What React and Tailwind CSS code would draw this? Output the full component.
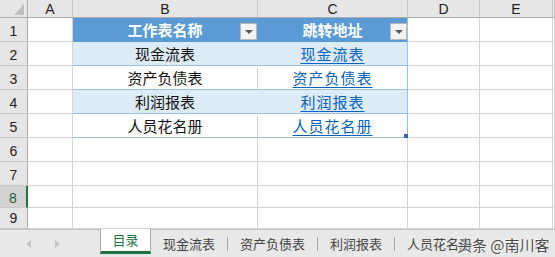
const cols = ["w-[28px]", "w-[45px]", "w-[185px]", "w-[150px]", "w-[72px]", "w-[73px]", "flex-1"];
const letters = ["A", "B", "C", "D", "E", ""];
const heights = ["h-[24px]", "h-[24px]", "h-[24px]", "h-[24px]", "h-[24px]", "h-[24px]", "h-[24px]", "h-[22px]", "h-[21px]"];

const names = ["现金流表", "资产负债表", "利润报表", "人员花名册"];

const Dropdown = () => (
  <div className="absolute right-0 bottom-[1px] w-[17px] h-[17px] bg-[#f3f3f3] border border-[#b8b8b8] flex items-center justify-center">
    <div className="w-0 h-0 border-l-[4px] border-r-[4px] border-t-[4px] border-l-transparent border-r-transparent border-t-[#555]" />
  </div>
);

const cellBase = "flex-1 flex items-center justify-center pt-[2px] border-r border-b";

const TableCell = ({ row, col }) => {
  if (row === 1) {
    return (
      <div className={`${cellBase} relative bg-[#5b9bd5] text-white font-bold border-b-[#5b9bd5] ${col === "B" ? "border-r-[#5b9bd5]" : "border-r-[#9bc2e6]"}`}>
        {col === "B" ? "工作表名称" : "跳转地址"}
        <Dropdown />
      </div>
    );
  }
  const striped = row % 2 === 0;
  const bg = striped ? "bg-[#ddebf7]" : "bg-white";
  const name = names[row - 2];
  if (col === "B") {
    return (
      <div className={`${cellBase} ${bg} border-b-[#9bc2e6] ${striped ? "border-r-[#ddebf7]" : "border-r-[#d4d4d4]"} text-[#111]`}>
        {name}
      </div>
    );
  }
  return (
    <div className={`${cellBase} relative ${bg} border-b-[#9bc2e6] border-r-[#9bc2e6]`}>
      <span className="text-[#0563c1] underline underline-offset-[3px] tracking-[1px]">{name}</span>
      {row === 5 && <div className="absolute right-[-1px] bottom-[-1px] w-[4px] h-[4px] bg-[#3a63b8]" />}
    </div>
  );
};

const GridRow = ({ n }) => {
  const selected = n === 8;
  return (
    <div className={`flex shrink-0 ${heights[n - 1]}`}>
      <div
        className={`${cols[0]} shrink-0 flex items-center justify-center border-b border-b-[#c8c8c8] text-[14px] ${
          n === 9 ? "pt-[1px]" : "pt-[3px]"
        } ${
          selected ? "bg-[#d2d2d2] text-[#1e5f3a] border-r-2 border-r-[#217346]" : "bg-[#e6e6e6] text-[#222] border-r border-r-[#ababab]"
        }`}
        style={{ fontFamily: '"Liberation Sans", Arial, sans-serif' }}
      >
        {n}
      </div>
      {cols.slice(1).map((w, i) => {
        const col = letters[i];
        const inTable = n <= 5 && (col === "B" || col === "C");
        return (
          <div key={i} className={`${w} shrink-0 flex`}>
            {inTable ? (
              <TableCell row={n} col={col} />
            ) : (
              <div className={`${cellBase} border-r-[#d4d4d4] border-b-[#d4d4d4]`} />
            )}
          </div>
        );
      })}
    </div>
  );
};

const Tab = ({ label }) => (
  <div className="flex items-center">
    <div className="px-3 text-[#444]">{label}</div>
    <div className="w-px h-[14px] bg-[#a6a6a6]" />
  </div>
);

export default function App() {
  return (
    <div
      className="w-[555px] h-[257px] overflow-hidden bg-white relative text-[15px] flex flex-col"
      style={{ fontFamily: '"Noto Sans CJK SC", "Liberation Sans", sans-serif' }}
    >
      <div className="h-[229px] shrink-0 overflow-hidden flex flex-col">
        {/* column headers */}
        <div className="flex h-[18px] shrink-0">
          <div className={`${cols[0]} shrink-0 relative bg-[#e6e6e6] border-r border-b border-[#ababab]`}>
            <svg className="absolute right-[3px] bottom-[2px]" width="10" height="11" viewBox="0 0 10 11">
              <polygon points="10,0 10,11 0,11" fill="#bfbfbf" />
            </svg>
          </div>
          {cols.slice(1).map((w, i) => (
            <div
              key={i}
              className={`${w} shrink-0 bg-[#e6e6e6] border-r border-r-[#c8c8c8] border-b border-b-[#ababab] flex items-center justify-center pt-[2px] text-[14px] text-[#222]`}
              style={{ fontFamily: '"Liberation Sans", Arial, sans-serif' }}
            >
              {letters[i]}
            </div>
          ))}
        </div>
        {[1, 2, 3, 4, 5, 6, 7, 8, 9].map((n) => (
          <GridRow key={n} n={n} />
        ))}
      </div>

      {/* sheet tabs */}
      <div className="h-[28px] shrink-0 flex bg-[#e8e8e8] border-t border-[#c6c6c6] text-[13px]">
        <div className="w-[100px] shrink-0 flex items-center">
          <svg className="ml-[26px]" width="5" height="8" viewBox="0 0 5 8">
            <polygon points="5,0 5,8 0,4" fill="#c4c4c4" />
          </svg>
          <svg className="ml-[24px]" width="5" height="8" viewBox="0 0 5 8">
            <polygon points="0,0 0,8 5,4" fill="#c4c4c4" />
          </svg>
        </div>
        <div className="w-[51px] h-[25px] -mt-px shrink-0 bg-white border-x border-[#ababab] border-b-[3px] border-b-[#217346] flex items-center justify-center text-[#217346]">
          目录
        </div>
        <Tab label="现金流表" />
        <Tab label="资产负债表" />
        <Tab label="利润报表" />
        <div className="flex items-center px-3 text-[#444]">人员花名册</div>
      </div>

      <div
        className="absolute left-[457px] top-[234px] text-[15px] text-[#4a4a4a] whitespace-nowrap"
        style={{ textShadow: "0 0 2px #fff, 0 0 2px #fff" }}
      >
        头条 @南川客
      </div>
    </div>
  );
}
